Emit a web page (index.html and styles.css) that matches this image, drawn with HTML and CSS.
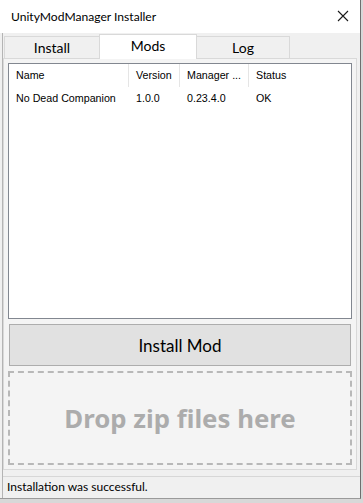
FILE: index.html
```html
<!DOCTYPE html>
<html lang="en">
   <head>
      <meta charset="UTF-8">
      <link rel="stylesheet" href="styles.css">
   </head>
   <body>
      <div class="window">
         <div class="titlebar">
            <span class="title">UnityModManager Installer</span>
            <svg class="close" width="12" height="12" viewBox="0 0 12 12">
               <path d="M1 1 L11 11 M11 1 L1 11" stroke="#1a1a1a" stroke-width="1.1" fill="none"/>
            </svg>
         </div>
         <div class="client">
            <div class="tabs">
               <div class="tab">Install</div>
               <div class="tab active">Mods</div>
               <div class="tab">Log</div>
            </div>
            <div class="page">
               <div class="list">
                  <div class="row header">
                     <div class="col name">Name</div>
                     <div class="col version">Version</div>
                     <div class="col manager">Manager ...</div>
                     <div class="col status">Status</div>
                  </div>
                  <div class="row">
                     <div class="col name">No Dead Companion</div>
                     <div class="col version">1.0.0</div>
                     <div class="col manager">0.23.4.0</div>
                     <div class="col status">OK</div>
                  </div>
               </div>
               <button class="install_btn">Install Mod</button>
               <div class="drop">Drop zip files here</div>
            </div>
            <div class="statusbar">Installation was successful.</div>
         </div>
      </div>
   </body>
</html>
```

FILE: styles.css
```css
*{
    box-sizing: border-box;
}

body{
    margin: 0;
    width: 363px;
    height: 503px;
    background: #d8d8d8;
    font-family: "Lato", "Noto Sans", sans-serif;
    color: #000;
    overflow: hidden;
}

.window{
    width: 361px;
    height: 499px;
    background: #f0f0f0;
    border-right: 1px solid #6e6e6e;
    border-bottom: 1px solid #9a9a9a;
    display: flex;
    flex-direction: column;
}

.titlebar{
    height: 33px;
    background: #fff;
    display: flex;
    align-items: center;
    padding: 0 11px 0 11px;
}

.title{
    font-size: 12.1px;
    flex: 1;
    margin-top: -1px;
}

.close{
    margin-top: -1px;
}

.client{
    flex: 1;
    display: flex;
    flex-direction: column;
    border-left: 1px solid #b4b4b4;
    margin-left: 2px;
}

.tabs{
    display: flex;
    height: 25px;
    padding-left: 1px;
    align-items: flex-end;
}

.tab{
    height: 22px;
    border: 1px solid #d9d9d9;
    border-bottom: none;
    background: #f0f0f0;
    font-size: 14px;
    text-align: center;
    line-height: 21px;
}

.tab:nth-child(1){
    width: 95px;
    border-right: none;
}

.tab:nth-child(2){
    width: 98px;
}

.tab:nth-child(3){
    width: 93px;
    border-left: none;
}

.tab.active{
    height: 25px;
    background: #fff;
    line-height: 21px;
    position: relative;
    top: 1px;
    z-index: 1;
}

.page{
    width: 354px;
    height: 412px;
    border: 1px solid #d9d9d9;
    background: #f4f4f4;
    padding: 4px;
    display: flex;
    flex-direction: column;
}

.list{
    height: 256px;
    border: 1px solid #828790;
    background: #fff;
    font-family: "Liberation Sans", Arial, sans-serif;
    font-size: 10.7px;
}

.row{
    display: flex;
    height: 19px;
    align-items: center;
}

.row.header{
    height: 23px;
    margin-bottom: 1px;
}

.col{
    padding-left: 7px;
    white-space: nowrap;
    overflow: hidden;
}

.header .col{
    height: 23px;
    line-height: 23px;
    border-right: 1px solid #e5e5e5;
}

.header .status{
    border-right: none;
}

.name{
    width: 120px;
}

.version{
    width: 51px;
}

.manager{
    width: 69px;
}

.status{
    flex: 1;
}

.install_btn{
    margin: 5px 1px 0 1px;
    height: 42px;
    border: 1px solid #adadad;
    background: #e1e1e1;
    font-family: inherit;
    font-size: 17px;
    color: #000;
    padding: 0;
}

.drop{
    margin-top: 5px;
    height: 94px;
    border: 2px dashed #b8b8b8;
    display: flex;
    align-items: center;
    justify-content: center;
    font-family: "Noto Sans", sans-serif;
    font-size: 25.8px;
    font-weight: bold;
    color: #acacac;
}

.statusbar{
    margin-top: 6px;
    border-top: 1px solid #d7d7d7;
    flex: 1;
    font-size: 12px;
    padding: 2px 0 0 4px;
}
```
